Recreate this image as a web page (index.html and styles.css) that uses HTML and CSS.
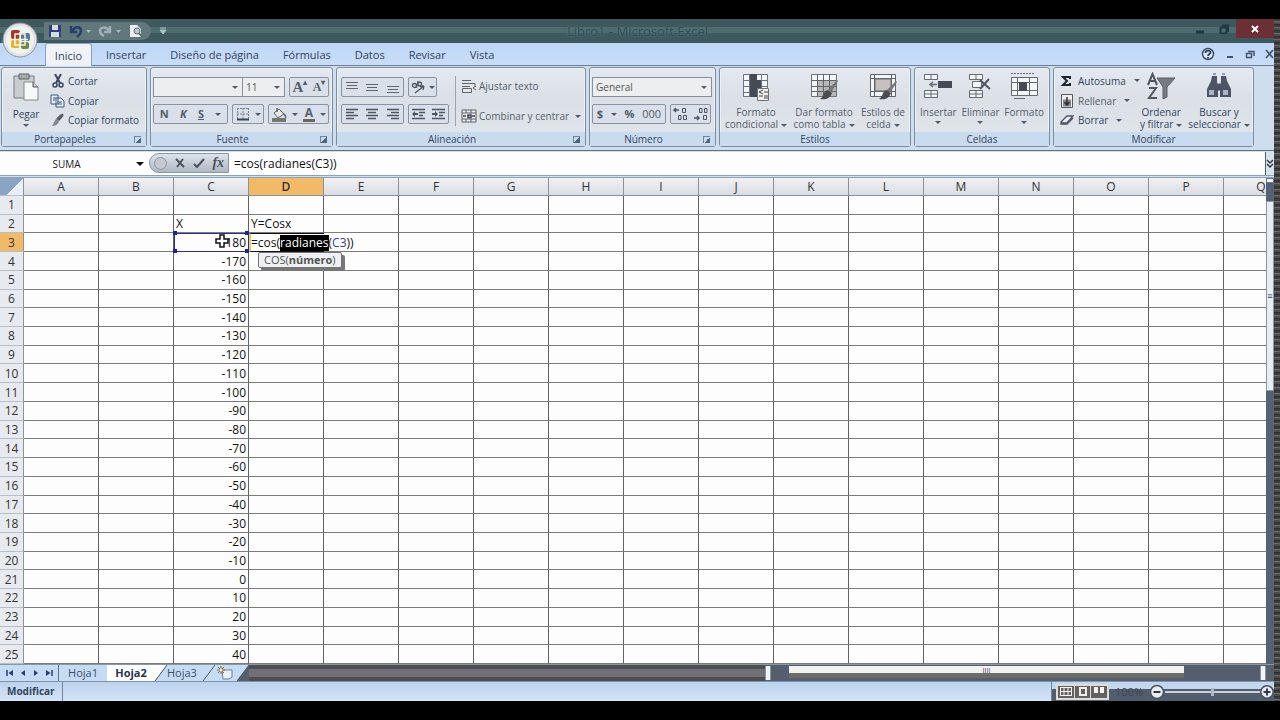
FILE: index.html
```html
<!DOCTYPE html>
<html lang="es">
<head>
<meta charset="utf-8">
<title>Libro1 - Microsoft Excel</title>
<link rel="stylesheet" href="styles.css">
</head>
<body>
<div class="screen">
<main class="window">
  <header class="titlebar">
    <button class="office" aria-label="Botón de Office">
      <svg width="36" height="36" viewBox="0 0 36 36"><circle cx="18" cy="18" r="17" fill="#dfe3e6" stroke="#8c979d"/><circle cx="18" cy="18" r="14" fill="#f2f2ee"/><rect x="9" y="8" width="9" height="9" rx="2" fill="#a33b22"/><rect x="19" y="11" width="9" height="8" rx="2" fill="#55799f"/><rect x="9" y="18" width="9" height="8" rx="2" fill="#e0b62c"/><rect x="19" y="20" width="8" height="7" rx="2" fill="#6a8a45"/><path d="M13 12h10v11H13zM11 17.500h15M18 10v16" fill="none" stroke="#f7f3e8" stroke-width="1.500"/></svg>
    </button>
    <div class="quick">
      <button aria-label="Guardar"><svg width="14" height="14" viewBox="0 0 14 14"><path d="M1 1h12v12H1z" fill="#33417a"/><path d="M4 1h6v5H4zM3 8h8v5H3z" fill="#d5dde8"/></svg></button>
      <button aria-label="Deshacer"><svg width="22" height="14" viewBox="0 0 22 14"><path d="M2 2v6h6M3 7c3-5 9-5 9 0 0 3-2 4-4 6" fill="none" stroke="#26406f" stroke-width="2.500"/><path d="M17 6h5l-2.500 3z" fill="#a9bcc0"/></svg></button>
      <button aria-label="Rehacer"><svg width="24" height="14" viewBox="0 0 24 14"><path d="M12 2v6H6M11 7C8 2 2 3 2 7c0 3 2 4 4 5" fill="none" stroke="#a1b0b4" stroke-width="2.500"/><path d="M18 6h5l-2.500 3z" fill="#a9bcc0"/></svg></button>
      <button aria-label="Vista preliminar"><svg width="14" height="14" viewBox="0 0 14 14"><path d="M1 1h7l4 4v8H1z" fill="#eceff0"/><circle cx="8" cy="7" r="3" fill="#b9c8cf" stroke="#5d6d74"/><path d="M10 9l3 4" stroke="#5d6d74" stroke-width="2"/></svg></button>
    </div>
    <button class="quickmore" aria-label="Personalizar barra"><svg width="8" height="8" viewBox="0 0 8 8"><path d="M1 1h6M1 3h6L4 7z" fill="#a9c3c6" stroke="#a9c3c6"/></svg></button>
    <h1 class="title">Libro1 - Microsoft Excel</h1>
    <div class="winbtns">
      <button aria-label="Minimizar"><svg width="10" height="10"><path d="M1 8h8" stroke="#1d3a44" stroke-width="3"/></svg></button>
      <button aria-label="Restaurar"><svg width="10" height="10"><path d="M1.500 3.500h6v6h-6zM3 1.500h6V8" fill="none" stroke="#1d3a44" stroke-width="2"/></svg></button>
      <button class="close" aria-label="Cerrar"><svg width="8" height="8"><path d="M1 1l6 6M7 1L1 7" stroke="#fff" stroke-width="2"/></svg></button>
    </div>
  </header>

  <nav class="tabs">
    <button class="tab active">Inicio</button>
    <button class="tab">Insertar</button>
    <button class="tab wide">Diseño de página</button>
    <button class="tab">Fórmulas</button>
    <button class="tab">Datos</button>
    <button class="tab">Revisar</button>
    <button class="tab">Vista</button>
    <div class="docbtns">
      <button aria-label="Ayuda"><svg width="14" height="14"><circle cx="7" cy="7" r="5.500" fill="#dfe9f4" stroke="#3c5168" stroke-width="1.500"/><path d="M4.500 6c0-3 5-3 5-.5C9.500 7 7 7 7 9M7 10v1.500" fill="none" stroke="#2c405a" stroke-width="1.800"/></svg></button>
      <button aria-label="Minimizar libro"><svg width="10" height="10"><path d="M2 8h6" stroke="#45566c" stroke-width="2"/></svg></button>
      <button aria-label="Restaurar libro"><svg width="10" height="10"><path d="M1.500 4.500h5v4h-5zM3 2.500h6V7" fill="none" stroke="#45566c" stroke-width="1.500"/></svg></button>
      <button aria-label="Cerrar libro"><svg width="9" height="10"><path d="M1 1l7 8M8 1L1 9" stroke="#45566c" stroke-width="1.700"/></svg></button>
    </div>
  </nav>

  <section class="ribbon">
    <section class="group g-clip">
      <div class="body">
        <button class="big"><svg width="28" height="32" viewBox="0 0 28 32"><path d="M2 4h20v22H2z" fill="#c9ccd0" stroke="#777c83"/><path d="M7 2h10v5H7z" fill="#aaa9a5" stroke="#5e6266"/><path d="M12 10h9l5 5v13H12z" fill="#f7f8f9" stroke="#84898f"/><path d="M21 10v5h5" fill="#ccc" stroke="#555"/></svg><span>Pegar</span><i class="caret"></i></button>
        <div class="stack">
          <button class="cmd"><svg width="16" height="14" viewBox="0 0 16 14"><path d="M5 0l5 9M11 0L6 9" stroke="#38455b" stroke-width="2"/><circle cx="5" cy="11" r="2" fill="none" stroke="#38455b" stroke-width="1.500"/><circle cx="11" cy="11" r="2" fill="none" stroke="#38455b" stroke-width="1.500"/></svg>Cortar</button>
          <button class="cmd"><svg width="16" height="14" viewBox="0 0 16 14"><path d="M1 1h7v9H1zM6 4h5l3 3v6H6z" fill="#e9eef5" stroke="#3d5681"/><path d="M3 4h3M3 6h2M8 8h4M8 10h4" stroke="#3d5681"/></svg>Copiar</button>
          <button class="cmd"><svg width="16" height="14" viewBox="0 0 16 14"><path d="M13 1c2 1-2 5-4 7L6 6c2-2 5-6 7-5z" fill="#5c5f66"/><path d="M6 6l3 2c-1 4-4 5-7 5 2-2 2-5 4-7z" fill="#85878d"/></svg>Copiar formato</button>
        </div>
      </div>
      <footer><span>Portapapeles</span><i class="launch"></i></footer>
    </section>

    <section class="group g-font">
      <div class="body rows">
        <div class="row">
          <span class="join"><span class="combo w90"><select aria-label="Fuente"><option></option></select></span><span class="combo w42"><select aria-label="Tamaño"><option>11</option></select></span></span>
          <span class="box"><button class="glyph serif">A<sup>▴</sup></button><button class="glyph serif small">A<sup>▾</sup></button></span>
        </div>
        <div class="row">
          <span class="box w75"><button class="glyph"><b>N</b></button><button class="glyph"><b><em>K</em></b></button><button class="glyph"><b><u>S</u></b></button><i class="caret"></i></span>
          <span class="box w32"><button class="glyph" aria-label="Bordes"><svg width="14" height="14"><path d="M1 1.500h12M1 7h12M1.500 1v12M7 1v12M12.500 1v12" stroke="#7b828c" stroke-dasharray="2 1"/><path d="M1 12.500h12" stroke="#39424f" stroke-width="2"/></svg></button><i class="caret"></i></span>
          <span class="box w61"><button class="glyph" aria-label="Color de relleno"><svg width="16" height="15"><path d="M3 6l5-4 5 5-6 4z" fill="#e8e8e6" stroke="#5f6267"/><path d="M6 5V1M13 7c2 2 2 4 1 4" fill="none" stroke="#5f6267" stroke-width="1.500"/><path d="M1 11h14v4H1z" fill="#74766f"/></svg></button><i class="caret"></i><button class="glyph underbar">A</button><i class="caret"></i></span>
        </div>
      </div>
      <footer><span>Fuente</span><i class="launch"></i></footer>
    </section>

    <section class="group g-align">
      <div class="body">
        <div class="rows left">
          <div class="row">
            <span class="box w63"><button class="glyph" aria-label="Alinear arriba"><svg width="14" height="14"><path d="M1 2.500h12M2 5.500h10M1 8.500h12" stroke="#5d6673"/></svg></button><button class="glyph" aria-label="Alinear en el medio"><svg width="14" height="14"><path d="M1 4.500h12M2 7.500h10M1 10.500h12" stroke="#5d6673"/></svg></button><button class="glyph" aria-label="Alinear abajo"><svg width="14" height="14"><path d="M1 6.500h12M2 9.500h10M1 12.500h12" stroke="#5d6673"/></svg></button></span>
            <span class="box w29"><button class="glyph" aria-label="Orientación"><svg width="15" height="14"><circle cx="3.500" cy="5.500" r="2" fill="none" stroke="#50565f" stroke-width="1.300"/><circle cx="8.500" cy="4" r="2" fill="none" stroke="#50565f" stroke-width="1.300"/><path d="M5.500 4v4M7 1v4M4 13l9-7M13 6l-4 .5M13 6l-1 4" fill="none" stroke="#50565f" stroke-width="1.300"/></svg></button><i class="caret"></i></span>
          </div>
          <div class="row">
            <span class="box w63"><button class="glyph" aria-label="Izquierda"><svg width="14" height="14"><path d="M1 2.500h12M1 5.500h8M1 8.500h12M1 11.500h8" stroke="#4b5460" stroke-width="1.300"/></svg></button><button class="glyph" aria-label="Centrar"><svg width="14" height="14"><path d="M1 2.500h12M3 5.500h8M1 8.500h12M3 11.500h8" stroke="#4b5460" stroke-width="1.300"/></svg></button><button class="glyph" aria-label="Derecha"><svg width="14" height="14"><path d="M1 2.500h12M5 5.500h8M1 8.500h12M5 11.500h8" stroke="#4b5460" stroke-width="1.300"/></svg></button></span>
            <span class="box w41"><button class="glyph" aria-label="Disminuir sangría"><svg width="15" height="14"><path d="M1 2.500h13M8 5.500h6M8 8.500h4M1 11.500h13" stroke="#4b5460" stroke-width="1.300"/><path d="M1 7l3-3v2h3v2H4v2z" fill="#4b5460"/></svg></button><button class="glyph" aria-label="Aumentar sangría"><svg width="15" height="14"><path d="M1 2.500h13M8 5.500h6M8 8.500h4M1 11.500h13" stroke="#4b5460" stroke-width="1.300"/><path d="M7 7L4 4v2H1v2h3v2z" fill="#4b5460"/></svg></button></span>
          </div>
        </div>
        <div class="rows right">
          <button class="cmd"><svg width="16" height="14" viewBox="0 0 16 14"><path d="M1 1.500h9M1 4.500h13v4M1 7.500h8" fill="none" stroke="#5f646b"/><path d="M1.500 9.500h9v4h-9zM15 7l-3 2 3 2" fill="#e7e7e7" stroke="#5f646b"/></svg>Ajustar texto</button>
          <button class="cmd"><svg width="16" height="14" viewBox="0 0 16 14"><path d="M1 1h14v12H1zM1 4h14M1 10h14M5 1v3M10 1v3M5 10v3M10 10v3" fill="#eee" stroke="#5b616a"/><path d="M2 7h3M14 7h-3M7 6h3v2.500H7z" fill="none" stroke="#3f454e" stroke-width="1.500"/></svg>Combinar y centrar<i class="caret"></i></button>
        </div>
      </div>
      <footer><span>Alineación</span><i class="launch"></i></footer>
    </section>

    <section class="group g-num">
      <div class="body rows">
        <div class="row"><span class="combo fill"><select aria-label="Formato de número"><option>General</option></select></span></div>
        <div class="row">
          <span class="box w74"><button class="glyph"><b>$</b></button><i class="caret"></i><button class="glyph"><b>%</b></button><button class="glyph">000</button></span>
          <span class="box w41"><button class="glyph" aria-label="Aumentar decimales"><svg width="15" height="14"><path d="M1 3h5M3 1L1 3l2 2" fill="none" stroke="#4b5460" stroke-width="1.500"/><path d="M9.500 1.500h3v4h-3zM5.500 8.500h2.500v4H5.500zM10.500 8.500h3v4h-3z" fill="none" stroke="#4b5460"/></svg></button><button class="glyph" aria-label="Disminuir decimales"><svg width="15" height="14"><path d="M1 11h5M4 9l2 2-2 2" fill="none" stroke="#4b5460" stroke-width="1.500"/><path d="M6.500 1.500h2.500v4H6.500zM11.500 1.500h2.500v4h-2.500zM10.500 8.500h3v4h-3z" fill="none" stroke="#4b5460"/></svg></button></span>
        </div>
      </div>
      <footer><span>Número</span><i class="launch"></i></footer>
    </section>

    <section class="group g-style">
      <div class="body bigs">
        <button class="big"><svg width="30" height="30" viewBox="0 0 30 30"><path d="M2.500 2.500h24v22h-24zM2 8.500h25M2 14.500h25M2 20.500h25M8.500 2v23M20.500 2v23" fill="#f4f5f6" stroke="#6b737e"/><path d="M9 2h7v6h4v12h-4v5H9z" fill="#454b54"/><path d="M16.500 16.500h11v12h-11z" fill="#eee" stroke="#6b737e"/><path d="M22 18l-4 2 4 2M23 20h4M18 24h4M23 24h4M23 26h4" fill="none" stroke="#444"/></svg><span>Formato<br>condicional<i class="caret"></i></span></button>
        <button class="big"><svg width="30" height="30" viewBox="0 0 30 30"><path d="M2.500 2.500h25v22h-25z" fill="#f4f5f6" stroke="#6b737e"/><path d="M9 9h18v15H9z" fill="#b9b7b6"/><path d="M2 8.500h25M2 14.500h25M2 19.500h25M8.500 2v23M14.500 2v23M20.500 2v23" stroke="#5d656f"/><path d="M28 8l1 1-7 12-4-2z" fill="#777"/><path d="M18 18l5 3c-2 6-7 7-12 6 4-2 3-7 7-9z" fill="#4a4c50"/></svg><span>Dar formato<br>como tabla<i class="caret"></i></span></button>
        <button class="big"><svg width="30" height="30" viewBox="0 0 30 30"><path d="M2.500 2.500h25v22h-25z" fill="#f4f5f6" stroke="#5d656f"/><path d="M2 6.500h25M2 19.500h25M6.500 2v23M23.500 2v23" stroke="#5d656f"/><path d="M7 7h16v12H7z" fill="#c6c0bf" stroke="#6d6d70"/><path d="M28 9l1 1-7 11-4-2z" fill="#777"/><path d="M18 18l5 3c-2 6-7 7-12 6 4-2 3-7 7-9z" fill="#4a4c50"/></svg><span>Estilos de<br>celda<i class="caret"></i></span></button>
      </div>
      <footer><span>Estilos</span></footer>
    </section>

    <section class="group g-cells">
      <div class="body bigs">
        <button class="big"><svg width="30" height="30" viewBox="0 0 30 30"><path d="M1.500 2.500h13v5h-13zM8 2v5M1.500 18.500h13v7h-13zM8 18v8M1 22h13" fill="#f4f5f6" stroke="#626a74"/><path d="M15 9h14v7H15z" fill="#454b54"/><path d="M14 12.500H7M10 10l-3 2.500L10 15" fill="none" stroke="#626a74" stroke-width="1.500"/></svg><span>Insertar<i class="caret below"></i></span></button>
        <button class="big"><svg width="30" height="30" viewBox="0 0 30 30"><path d="M4.500 2.500h13v5h-13zM11 2v5M4.500 18.500h13v7h-13zM11 18v8M4 22h13M7.500 9.500h9v6h-9z" fill="#f4f5f6" stroke="#626a74"/><path d="M15 8l10 9M24 7l-9 10" stroke="#505660" stroke-width="2"/></svg><span>Eliminar<i class="caret below"></i></span></button>
        <button class="big"><svg width="30" height="30" viewBox="0 0 30 30"><path d="M2 1.500h24" stroke="#626a74" stroke-dasharray="2 1"/><path d="M2.500 5.500h26v18h-26zM2 10.500h26M2 18.500h26M8.500 5v19M20.500 5v19M5 26.500h11" fill="#f4f5f6" stroke="#626a74"/><path d="M10 10h8v9h-8z" fill="#454b54"/></svg><span>Formato<i class="caret below"></i></span></button>
      </div>
      <footer><span>Celdas</span></footer>
    </section>

    <section class="group g-edit">
      <div class="body">
        <div class="stack">
          <button class="cmd"><svg width="14" height="14" viewBox="0 0 14 14"><path d="M10 5V3H3l4 4-4 4h7V9" fill="none" stroke="#1d2531" stroke-width="2"/></svg>Autosuma<i class="caret"></i></button>
          <button class="cmd dim"><svg width="14" height="14" viewBox="0 0 14 14"><path d="M1.500.5h11v13h-11z" fill="#eee" stroke="#555b64"/><path d="M3 5.500h8v7H3z" fill="#888" /><path d="M7 3v7M4.500 8L7 11l2.500-3" fill="none" stroke="#333" stroke-width="1.500"/></svg>Rellenar<i class="caret"></i></button>
          <button class="cmd"><svg width="14" height="14" viewBox="0 0 14 14"><path d="M1 9l6-6h6l-6 7H1zM1 9v2h6l6-6" fill="#f4f5f7" stroke="#4a5566" stroke-width="1.300"/></svg>Borrar<i class="caret"></i></button>
        </div>
        <button class="big"><svg width="30" height="30" viewBox="0 0 30 30"><path d="M2 13L6.500 2 11 13M4 9h5M3 16h7L3 26h8" fill="none" stroke="#51565e" stroke-width="2"/><path d="M11 6h18l-8 9v10l-4 2V15z" fill="#777a80" stroke="#5b5f66"/></svg><span>Ordenar<br>y filtrar<i class="caret"></i></span></button>
        <button class="big"><svg width="30" height="30" viewBox="0 0 30 30"><path d="M8 4h5v6l1 3v12H3V17L7 9zM22 4h-5v6l-1 3v12h11V17l-4-8z" fill="#4b5565"/><path d="M5 18h5v5H5zM19 18h5v5h-5z" fill="#aab4c3"/><path d="M14 12h2v6h-2zM9 2h3M18 2h3" fill="#4b5565" stroke="#4b5565"/></svg><span>Buscar y<br>seleccionar<i class="caret"></i></span></button>
      </div>
      <footer><span>Modificar</span></footer>
    </section>
  </section>

  <section class="formulabar">
    <label class="namebox"><input aria-label="Cuadro de nombres" value="SUMA"><i class="caret dark"></i></label>
    <div class="capsule">
      <span class="knob"></span>
      <button aria-label="Cancelar"><svg width="10" height="10"><path d="M1 1l8 8M8 1L2 9" stroke="#4c525b" stroke-width="2"/></svg></button>
      <button aria-label="Introducir"><svg width="12" height="10"><path d="M1 6l3 3 7-8" fill="none" stroke="#4c525b" stroke-width="2"/></svg></button>
      <button class="fx"><em>fx</em></button>
    </div>
    <input class="formula" aria-label="Barra de fórmulas" value="=cos(radianes(C3))">
    <button class="expand" aria-label="Expandir"><svg width="8" height="12"><path d="M1 2l3 3 3-3M1 6l3 3 3-3" fill="none" stroke="#333b48" stroke-width="1.500"/></svg></button>
  </section>

  <section class="sheet">
    <div class="gridwrap">
      <table class="grid" id="grid"></table>
    </div>
    <div class="vscroll"><span class="split"></span><span class="thumb">≡</span></div>
  </section>

  <section class="sheetbar">
    <div class="nav">
      <button aria-label="Primera hoja"><svg width="8" height="8"><path d="M1 1v6" stroke="#27406a" stroke-width="1.500"/><path d="M7 1v6L2.500 4z" fill="#27406a"/></svg></button>
      <button aria-label="Hoja anterior"><svg width="8" height="8"><path d="M6 1v6L2 4z" fill="#27406a"/></svg></button>
      <button aria-label="Hoja siguiente"><svg width="8" height="8"><path d="M2 1v6l4-3z" fill="#27406a"/></svg></button>
      <button aria-label="Última hoja"><svg width="8" height="8"><path d="M7 1v6" stroke="#27406a" stroke-width="1.500"/><path d="M1 1v6l4.500-3z" fill="#27406a"/></svg></button>
    </div>
    <button class="sheettab">Hoja1</button>
    <button class="sheettab current">Hoja2</button>
    <svg class="slant" width="12" height="16"><path d="M0 0h12L0 16z" fill="#fff"/><path d="M12 0L0 16h12z" fill="#c6dbf4"/><path d="M12 0L0 16" stroke="#47586c"/></svg>
    <button class="sheettab third">Hoja3</button>
    <svg class="slant" width="12" height="16"><path d="M0 0h12v16H0z" fill="#c6dbf4"/><path d="M12 0L0 16" stroke="#47586c"/></svg>
    <button class="newsheet" aria-label="Insertar hoja"><svg width="18" height="14"><path d="M5 4h10v7l-3 2H6z" fill="#eaf1fa" stroke="#6c7f99"/><path d="M4 0v8M0 4h8M1 1l6 6M7 1L1 7" stroke="#77643a"/><circle cx="4" cy="4" r="1.500" fill="#fff2b8"/></svg></button>
    <svg class="slant" width="12" height="16"><path d="M0 0h12L0 16z" fill="#c6dbf4"/><path d="M12 0L0 16" stroke="#47586c"/></svg>
    <div class="filler"></div>
    <span class="splitter"></span>
    <div class="hscroll"><span class="hthumb">IIII</span></div>
    <span class="splitter"></span>
  </section>

  <footer class="status">
    <span class="mode">Modificar</span>
    <div class="views">
      <span class="viewbox">
        <button aria-label="Normal"><svg width="14" height="11"><path d="M1 1.500h12M1 5.500h12M1 9.500h12M1.500 1v9M5 1v9M9 1v9M12.500 1v9" stroke="#f4f4f4"/></svg></button>
        <button aria-label="Diseño de página"><svg width="12" height="11"><path d="M2 1h8v9H2z" fill="#f1efee"/><path d="M4 3h4v5H4z" fill="#66615f"/></svg></button>
        <button aria-label="Salto de página"><svg width="12" height="11"><path d="M1 1h4v6H1zM7 1h4v6H7z" fill="#f4f4f4"/></svg></button>
      </span>
      <span class="pct">100%</span>
      <button class="round" aria-label="Alejar"><svg width="16" height="16"><circle cx="8" cy="8" r="6.500" fill="#e9eef5" stroke="#4b5360" stroke-width="1.500"/><path d="M4.500 8h7" stroke="#333a45" stroke-width="2"/></svg></button>
      <input type="range" aria-label="Zoom" class="zoom" value="50">
      <button class="round" aria-label="Acercar"><svg width="14" height="16"><circle cx="7" cy="8" r="6.200" fill="#e9eef5" stroke="#4b5360" stroke-width="1.500"/><path d="M3.500 8h7M7 4.500v7" stroke="#333a45" stroke-width="2"/></svg></button>
    </div>
  </footer>
</main>
<aside class="edge"></aside>
</div>
<script src="script.js"></script>
</body>
</html>
```
FILE: styles.css
```css
* { box-sizing: border-box; }
body { margin: 0; background: #000; font: 11px/14px "Open Sans", "Noto Sans", sans-serif; color: #33445f; }
button, input, select { font: inherit; color: inherit; margin: 0; padding: 0; border: 0; background: none; min-width: 0; }
button { display: inline-flex; align-items: center; justify-content: center; white-space: nowrap; }
svg { display: block; flex: none; }

.screen { display: flex; height: 100vh; padding: 19px 0; overflow: hidden; }
.window { flex: 1; min-width: 0; display: flex; flex-direction: column; background: #cfe0f5; }
.edge { flex: none; width: 6px; background: repeating-linear-gradient(#3c3c3c 0 2px, #6c6c6a 2px 3px, #4c4c4c 3px 5px, #2e2e2e 5px 6px); }

/* Title bar */
.titlebar { position: relative; flex: none; display: flex; height: 24px; background: linear-gradient(#3e595d 0 8px, #4c6c6e 8px 14px, #3e595e 14px); }
.office { position: absolute; left: 2px; top: 3px; z-index: 2; }
.quick { display: flex; align-items: center; gap: 7px; margin: 3px 0 3px 44px; padding: 0 8px 0 4px; border-radius: 0 9px 9px 0; background: #60777b; }
.quickmore { width: 24px; }
.title { flex: 1; margin: 0 88px 0 0; font-size: 13px; font-weight: 400; line-height: 24px; text-align: center; color: #2c4b53; text-shadow: 0 0 2px #5e868c; }
.winbtns { display: flex; align-items: flex-start; }
.winbtns button { width: 24px; height: 19px; }
.winbtns .close { width: 38px; background: #6b2f35; }

/* Ribbon tabs */
.tabs { flex: none; display: flex; height: 23px; padding-left: 45px; background: linear-gradient(#bdd6f8, #c9ddf8); border-bottom: 1px solid #6b7f94; }
.tab { padding: 2px 12px 0; }
.tab.active { width: 47px; padding: 2px 0 0; margin: 0 2px -1px 0; background: #eff3f8; border: 1px solid #8da3bd; border-bottom: 0; border-radius: 3px 3px 0 0; }
.docbtns { display: flex; gap: 10px; margin-left: auto; }

/* Ribbon */
.ribbon { flex: none; display: flex; gap: 3px; height: 85px; padding: 1px 1px 3px; font-size: 10px; background: #cfdeef; border-bottom: 1px solid #5f7380; overflow: hidden; }
.group { flex: none; display: flex; flex-direction: column; border: 1px solid #7b8da1; border-radius: 3px; background: linear-gradient(#e4e9ef, #dbe0e7 40%, #e1e6ec); box-shadow: inset 0 0 0 1px #edf2f7; }
.g-clip { width: 146px; } .g-font { width: 183px; } .g-align { width: 250px; }
.g-num { width: 127px; } .g-style { width: 192px; } .g-cells { width: 136px; } .g-edit { width: 201px; }
.body { flex: 1; min-height: 0; display: flex; }
.group footer { flex: none; display: flex; align-items: center; height: 14px; padding-right: 5px; background: #c8dbef; }
.group footer span { flex: 1; text-align: center; }
.g-style footer, .g-cells footer, .g-edit footer { padding: 0; }
.launch { width: 7px; height: 7px; margin-left: 6px; border: solid #70859d; border-width: 1px 0 0 1px; background: linear-gradient(135deg, transparent 50%, #51667f 50%); }
.caret { flex: none; display: inline-block; width: 0; height: 0; border: solid transparent; border-width: 3px 3px 0; border-top-color: #4e5a6b; vertical-align: middle; margin-left: 3px; }
.caret.dark { border-width: 4px 4px 0; border-top-color: #111; }
.caret.below { display: block; margin: 3px auto 0; }

.big { flex-direction: column; justify-content: flex-start; padding-top: 4px; line-height: 12px; }
.big svg { margin-bottom: 4px; }
.g-clip .big { width: 48px; }
.big > .caret { margin: 4px 0 0; }
.stack { display: flex; flex-direction: column; justify-content: space-between; padding: 3px 0 2px; }
.cmd { gap: 2px; height: 20px; justify-content: flex-start; }
.g-edit .cmd { gap: 4px; }
.cmd .caret { margin-left: 4px; }
.dim, .g-align .cmd, .g-style .big, .g-cells .big { color: #565e6b; }
.bigs { justify-content: space-between; padding: 0 5px; }
.g-edit .body { padding-left: 6px; gap: 6px; }
.g-edit .big { flex: none; }
.g-edit .stack { width: 74px; }

.rows { display: flex; flex-direction: column; gap: 7px; padding: 9px 3px 0 2px; }
.row { display: flex; gap: 4px; height: 20px; }
.join { display: flex; }
.combo { position: relative; display: flex; border: 1px solid #85919f; background: #eceeef; }
.combo select { appearance: none; width: 100%; padding-left: 3px; color: #555; }
.combo::after { content: ""; position: absolute; right: 4px; top: 8px; border: solid transparent; border-width: 3px 3px 0; border-top-color: #505a68; }
.w90 { width: 90px; } .w42 { width: 43px; margin-left: -1px; } .fill { flex: 1; }
.box { display: flex; align-items: center; justify-content: space-around; border: 1px solid #8794a5; border-radius: 2px; background: #d9e0e9; color: #555e6b; }
.g-font .row:first-child .box { flex: 1; }
.box .caret { margin: 0; }
.w75 { width: 75px; } .w32 { width: 32px; } .w61 { width: 61px; } .w63 { width: 63px; } .w29 { width: 29px; } .w41 { width: 41px; } .w74 { width: 74px; }
.glyph { font-size: 11px; }
.serif { font: bold 15px/16px "Liberation Serif", serif; }
.serif.small { font-size: 12px; }
.serif sup { font-size: 8px; line-height: 8px; align-self: flex-start; }
.underbar { font-size: 12px; line-height: 12px; border-bottom: 3px solid #6c6460; font-weight: 700; padding: 0 2px; }
.left { width: 118px; padding-left: 4px; }
.right { margin: 8px 0 6px; padding: 0 0 0 5px; border-left: 1px solid #9aa5b1; justify-content: space-between; gap: 0; }

/* Formula bar */
.formulabar { flex: none; display: flex; height: 23px; margin-top: 1px; background: #fdfdfd; }
.namebox { flex: none; display: flex; align-items: center; width: 149px; padding-right: 5px; color: #1b1b1b; }
.namebox input { flex: 1; text-align: center; font-size: 10px; }
.capsule { flex: none; display: flex; align-items: center; justify-content: space-around; width: 80px; margin: 1px 0 2px; border: 1px solid #8996a5; border-radius: 10px 0 0 10px; background: linear-gradient(#dde3ea, #aeb9c5); }
.knob { width: 13px; height: 13px; border-radius: 50%; background: #c3c9cf; border: 1px solid #8c949e; }
.fx { font: bold 14px/16px "Liberation Serif", serif; color: #4c525b; }
.formula { flex: 1; padding-left: 5px; font-size: 12px; color: #111; }
.expand { width: 9px; background: #d7e2ef; border-left: 1px solid #4b5c6e; }

/* Worksheet */
.sheet { flex: 1; min-height: 0; display: flex; border-top: 3px double #8da3b5; }
.gridwrap { flex: 1; min-width: 0; overflow: hidden; background: #fdfdfd; }
.grid { display: flex; flex-direction: column; width: max-content; height: 100%; font-size: 12px; color: #111; }
.grid thead { flex: none; }
.grid tbody { flex: 1; min-height: 0; display: flex; flex-direction: column; }
.grid tr { display: flex; }
.grid tbody tr { flex: 1; min-height: 0; }
.grid th, .grid td { position: relative; display: flex; align-items: center; width: 75px; padding: 1px 2px 0; border-right: 1px solid #626262; border-bottom: 1px solid #7c7c7c; white-space: nowrap; }
.grid th { justify-content: center; font-weight: 400; background: #e9ebee; color: #333; }
.grid thead th { height: 18px; background: linear-gradient(#f1f2f4, #d9dce1); border-color: #8b929b; }
.grid th:first-child { width: 24px; flex: none; background: #e7eaef; padding: 1px 0 0; border-right-color: #8b929b; border-bottom-color: #b7bec7; }
.grid thead th:first-child { background: linear-gradient(135deg, #8aa5c4 60%, #e8eff7 60%); }
.grid thead th.sel, .grid tbody th.sel { background: #f2b967; }
.grid thead th.sel { font-weight: 600; }
.grid td.num { justify-content: flex-end; }
.grid td.ref { outline: 1px solid #2c2c9c; outline-offset: -1px; z-index: 1; }
.ref::before, .ref::after { content: ""; position: absolute; left: -1px; width: 4px; height: 4px; background: #1f1fa6; box-shadow: 72px 0 #1f1fa6; }
.ref::before { top: -2px; } .ref::after { bottom: -2px; }
.grid td.edit { z-index: 3; padding: 0; border: solid #111; border-width: 1px 0; border-left: 2px solid #d9d65c; }
.entry { flex: none; display: flex; background: #fdfdfd; line-height: 16px; }
.entry mark { background: #000; color: #fff; }
.entry span { color: #3a3a9e; }
.tip { position: absolute; left: 7px; top: 18px; height: 16px; padding: 0 5px; font-size: 11px; line-height: 14px; border: 1px solid #747474; border-radius: 2px; background: #eef0f4; box-shadow: 3px 3px 0 #777; color: #555; }
.pointer { position: absolute; left: 40px; top: 0; z-index: 2; }
.vscroll { flex: none; display: flex; flex-direction: column; width: 8px; background: #566173; }
.split { height: 5px; margin-bottom: 18px; background: #eef1f5; border: 1px solid #69798c; }
.thumb { display: flex; align-items: center; justify-content: center; height: 39%; background: #e8edf3; border: 1px solid #8996a6; font-size: 9px; }

/* Sheet tabs and horizontal scroll */
.sheetbar { flex: none; display: flex; height: 17px; border-top: 1px solid #8996a5; background: #545e6c; padding-right: 8px; }
.nav { flex: none; display: flex; justify-content: space-around; width: 59px; padding: 0 3px; background: #c6dbf4; border-right: 1px solid #5e7188; }
.sheettab { flex: none; width: 48px; background: #c6dbf4; color: #3a4f70; }
.sheettab.current { background: #fff; font-weight: 700; color: #25344e; }
.sheettab.third { width: 36px; justify-content: flex-start; }
.newsheet { width: 22px; background: #c6dbf4; }
.filler { flex: 520 1 0; background: linear-gradient(#4d4d52 0 4px, #707076 4px 12px, #4d4d52 12px); }
.splitter { flex: none; width: 6px; margin: 1px 0; background: #f1f5fa; border: solid #8593a5; border-width: 0 1px; }
.hscroll { flex: 398 1 0; display: flex; padding: 1px 76px 3px 18px; }
.hthumb { flex: 1; text-align: center; font-size: 7px; line-height: 9px; background: linear-gradient(#f1f1ef 0 7px, #6a6d68 7px); }

/* Status bar */
.status { flex: none; display: flex; height: 20px; background: linear-gradient(#bcd3ee, #d5e4f6); border-top: 1px solid #7f93aa; }
.mode { width: 63px; padding-left: 7px; font-size: 10px; line-height: 18px; font-weight: 700; border-right: 1px solid #71859d; }
.views { display: flex; align-items: center; margin-left: auto; width: 223px; padding-left: 4px; border-left: 1px solid #71859d; background: linear-gradient(#c2d6ee 0 7px, #525d6d 7px); }
.viewbox { display: flex; justify-content: space-around; width: 53px; height: 16px; border: 2px solid #dcdcdc; background: #66615f; }
.viewbox button { flex: 1; border-right: 1px solid #dcdcdc; }
.viewbox button:last-child { border: 0; }
.pct { width: 40px; text-align: center; color: #3b4452; }
.zoom { flex: 1; height: 14px; appearance: none; background: linear-gradient(transparent 6px, #c6d0dc 6px 8px, transparent 8px); }
.zoom::-webkit-slider-thumb { appearance: none; width: 3px; height: 8px; background: #aeb8c6; }
```
FILE: script.js
```js
const columns = "ABCDEFGHIJKLMNOPQ".split("");
const grid = document.getElementById("grid");

const head = grid.createTHead().insertRow();
head.append(document.createElement("th"));
for (const name of columns) {
  const th = document.createElement("th");
  th.textContent = name;
  if (name === "D") th.className = "sel";
  head.append(th);
}

const body = grid.createTBody();
for (let r = 1; r <= 25; r++) {
  const row = body.insertRow();
  const th = document.createElement("th");
  th.textContent = r;
  if (r === 3) th.className = "sel";
  row.append(th);
  for (const name of columns) {
    const td = row.insertCell();
    if (name === "C" && r === 2) td.textContent = "X";
    if (name === "D" && r === 2) td.textContent = "Y=Cosx";
    if (name === "C" && r >= 3) {
      td.className = "num";
      td.textContent = -180 + (r - 3) * 10;
    }
    if (name === "C" && r === 3) {
      td.classList.add("ref");
      td.insertAdjacentHTML("beforeend", '<svg class="pointer" width="16" height="16"><path d="M6 2h4v4h4v4h-4v4H6v-4H2V6h4z" fill="#fff" stroke="#111" stroke-width="1.500"/></svg>');
    }
    if (name === "D" && r === 3) {
      td.className = "edit";
      td.innerHTML = '<div class="entry">=cos(<mark>radianes</mark>(<span>C3</span>))</div><div class="tip">COS(<b>número</b>)</div>';
    }
  }
}
```
